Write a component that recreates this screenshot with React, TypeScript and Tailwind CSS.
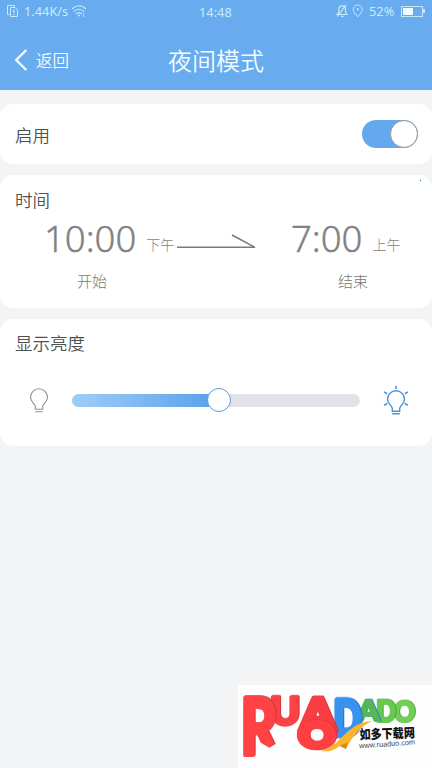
const cjk = "font-['Noto_Sans_CJK_SC',sans-serif]";
const latin = "font-['Noto_Sans','Noto_Sans_CJK_SC',sans-serif]";

function StatusBar() {
  return (
    <div className={`flex h-[22px] items-center text-[13px] leading-[22px] text-[#c6ebfb] ${latin}`}>
      <svg className="ml-[6px] shrink-0" width="13" height="14" viewBox="0 0 13 14" fill="none" stroke="currentColor">
        <path d="M3.5 10.5H1.5V1.5H8.5V3M4.5 3.5H9L11.5 6V12.5H4.5Z" />
        <path d="M7.8 5.5V9M7.8 10V11.3" strokeWidth="1.2" />
      </svg>
      <span className="ml-[5px] w-[46px] whitespace-nowrap text-[12.8px]">1.44K/s</span>
      <svg className="ml-px shrink-0" width="16" height="14" viewBox="0 0 16 14" fill="none" stroke="currentColor" strokeWidth="1.1">
        <path d="M1 5.2C5 .6 11 .6 15 5.2M3 7.7C6 4.4 10 4.4 13 7.7M5.2 10C7 8.2 9 8.2 10.8 10" />
        <circle cx="8" cy="11.4" r="1" fill="currentColor" stroke="none" />
        <path d="M12.5 9V13" strokeDasharray="1.5 .8" />
      </svg>
      <span className="ml-[112px] mt-[2px] w-[36px] whitespace-nowrap text-[12.8px]">14:48</span>
      <svg className="ml-[101px] shrink-0" width="12" height="14" viewBox="0 0 12 14" fill="none" stroke="currentColor" strokeWidth="1.2">
        <path d="M1 10.5H11L9.5 8.3V5C9.5 .8 2.8 .8 2.8 5V8.3ZM5 12.3H7.5M10 .8L1.5 12.5" />
      </svg>
      <svg className="ml-[4px] shrink-0" width="12" height="14" viewBox="0 0 12 14" fill="none" stroke="currentColor">
        <path d="M5.7 12.8C3.7 10.5 1.2 8 1.2 5.5A4.5 4.5 0 0 1 10.2 5.5C10.2 8 7.7 10.5 5.7 12.8Z" />
        <circle cx="5.7" cy="5.3" r="1.1" fill="currentColor" stroke="none" />
      </svg>
      <span className="ml-[5px] w-[28px] whitespace-nowrap text-[12.8px]">52%</span>
      <div className="ml-[4px] flex h-[11px] w-[22px] border border-[#bfe9fb] p-px">
        <div className="w-[10px] bg-[#edfafe]" />
      </div>
      <div className="h-1 w-[2px] bg-[#bfe9fb]" />
    </div>
  );
}

function Time({ value, half, label, className, labelClass }: { value: string; half: string; label: string; className: string; labelClass: string }) {
  return (
    <div className={className}>
      <div className="flex h-[52px] items-start whitespace-nowrap text-[#7e8282]">
        <span className={`text-[36.5px] font-light leading-[50px] [-webkit-text-stroke:0.4px_#7e8282] ${latin}`}>{value}</span>
        <span className="ml-[10px] mt-[21px] text-[14px] font-light leading-[20px]">{half}</span>
      </div>
      <div className={`mt-[5px] text-[15px] font-light leading-[22px] text-[#777] ${labelClass}`}>{label}</div>
    </div>
  );
}

function Bulb({ lit }: { lit?: boolean }) {
  return (
    <svg className="block shrink-0 overflow-visible" width="28" height="30" viewBox={lit ? "0 -2.5 28 30" : "0 -0.5 28 30"} fill="none" stroke={lit ? "#4b96dc" : "#8c9197"} strokeWidth={lit ? 1.4 : 1.1}>
      <path d="M10.3 23.7V20.8C9.8 17.7 5.5 16.7 5.5 11.8A8.5 8.5 0 0 1 22.5 11.8C22.5 16.7 18.2 17.7 17.7 20.8V23.7ZM10.2 26.2H17.8" />
      {lit && <path d="M14 -1.5V1.5M2 4.5L5.3 6.2M26 4.5L22.7 6.2M2 17.8L5.3 16M26 17.8L22.7 16" strokeWidth="1.6" />}
    </svg>
  );
}

type LetterProps = { ch: string; x: number; y: number; w: number; h: number; fill: string; side: string; weight?: number };

function Letter({ ch, x, y, w, h, fill, side, weight = 7 }: LetterProps) {
  return (
    <g transform={`translate(${x} ${y}) scale(1 ${h / 72})`} fontFamily="Lato" fontWeight="900" fontSize="100" style={{ filter: `drop-shadow(3px -1px 0 ${side})` }}>
      <text textLength={w} lengthAdjust="spacingAndGlyphs" fill={fill} stroke={fill} strokeWidth={weight} strokeLinejoin="round">{ch}</text>
    </g>
  );
}

function Logo() {
  return (
    <svg width="194" height="83" viewBox="18 15 582 249" className="block overflow-visible">
      <defs>
        <clipPath id="r-leg"><path d="M18 15H155V178L112 203L72 180V240H18Z" /></clipPath>
      </defs>
      <Letter ch="O" x={484} y={125} w={65} h={62} fill="#70cf55" side="#4aa83c" weight={7} />
      <Letter ch="D" x={431} y={125} w={60} h={64} fill="#67c94f" side="#45a43a" weight={7} />
      <Letter ch="A" x={374} y={122} w={68} h={62} fill="#55b858" side="#3285c8" weight={7} />
      <Letter ch="D" x={304} y={169} w={84} h={108} fill="#3992ef" side="#2573ca" weight={9} />
      <Letter ch="U" x={113} y={134} w={90} h={80} fill="#fb4244" side="#d9353c" weight={8} />
      <Letter ch="A" x={203} y={153} w={106} h={97} fill="#f83e42" side="#d9303a" weight={9} />
      <Letter ch="O" x={199} y={205} w={110} h={78} fill="#ff3f42" side="#d9303a" weight={13} />
      <g clipPath="url(#r-leg)">
        <Letter ch="R" x={25} y={224} w={112} h={170} fill="#ff4244" side="#d9353c" weight={5} />
      </g>
      <path d="M265 213C323 205 342 127 420 123C385 139 361 169 342 207L323 197C305 213 286 216 265 213Z" fill="#fbb52d" />
      <path d="M322 197L348 186L342 207Z" fill="#dc8d19" />
      <text x="383" y="178" transform="rotate(-2 383 178)" textLength="166" lengthAdjust="spacingAndGlyphs" fontFamily="Noto Sans CJK SC" fontSize="39" fontWeight="900" fill="#111">如多下载网</text>
      <text x="382" y="205" transform="rotate(-4 382 205)" textLength="168" lengthAdjust="spacingAndGlyphs" fontFamily="Liberation Sans" fontSize="22" fill="#444">www.ruaduo.com</text>
    </svg>
  );
}

export default function App() {
  return (
    <div className={`flex h-[768px] w-[432px] flex-col overflow-hidden bg-[#f2f4f6] ${cjk}`}>
      <header className="h-[90px] shrink-0 bg-[#68abee]">
        <StatusBar />
        <div className="grid h-[76px] grid-cols-[1fr_auto_1fr] items-center text-[#f3fcff]">
          <div className="flex items-center">
            <svg className="ml-[14px]" width="14" height="22" viewBox="0 0 14 22" fill="none" stroke="currentColor" strokeWidth="2.4"><path d="M12.3 1L2.2 11L12.3 21" /></svg>
            <span className="ml-2 text-[16.5px] font-[350]">返回</span>
          </div>
          <h1 className="text-[24px] font-[350] leading-9">夜间模式</h1>
        </div>
      </header>
      <main className="mt-[14px] flex flex-col gap-[11px] text-[#505050]">
        <section className="flex h-[60px] items-center justify-between rounded-[13px] bg-white pl-[15px] pr-[14px]">
          <span className="mt-0.5 text-[17.5px] font-[350]">启用</span>
          <div className="flex h-7 w-14 justify-end rounded-full bg-[#64a9ee]">
            <div className="size-7 rounded-full border border-[#999] bg-white" />
          </div>
        </section>
        <section className="h-[133px] rounded-[13px] bg-white">
          <div className="flex justify-between">
            <h2 className="ml-[15px] mt-3 text-[17.5px] font-[350] leading-[26px]">时间</h2>
            <i className="mr-[11px] mt-[5px] size-px bg-green-700" />
          </div>
          <div className="flex">
            <Time value="10:00" half="下午" label="开始" className="ml-[44px] w-[133px]" labelClass="ml-[33px]" />
            <svg className="mt-[20px] shrink-0" width="80" height="18" viewBox="0 0 80 18" fill="none" stroke="#777b7d" strokeWidth="1.5"><path d="M0 14.3H78L55 2" /></svg>
            <Time value="7:00" half="上午" label="结束" className="ml-[34px]" labelClass="ml-[47px]" />
          </div>
        </section>
        <section className="h-[127px] rounded-[13px] bg-white">
          <h2 className="ml-[15px] pt-[11px] text-[17.5px] font-[350] leading-[26px]">显示亮度</h2>
          <div className="mt-[29px] flex h-[30px] items-center">
            <div className="ml-[25px]"><Bulb /></div>
            <div className="ml-[19px] flex h-[13px] w-[288px] items-center rounded-full bg-[#e2e2e8]">
              <div className="h-full w-[147px] rounded-l-full bg-linear-to-r from-[#9fcdf8] to-[#579fe9]" />
              <div className="-ml-3 size-6 rounded-full border border-[#5a9bd8] bg-white" />
            </div>
            <div className="ml-[22px]"><Bulb lit /></div>
          </div>
        </section>
      </main>
      <footer className="mt-auto h-[83px] w-[194px] self-end bg-[#fefefe]"><Logo /></footer>
    </div>
  );
}
